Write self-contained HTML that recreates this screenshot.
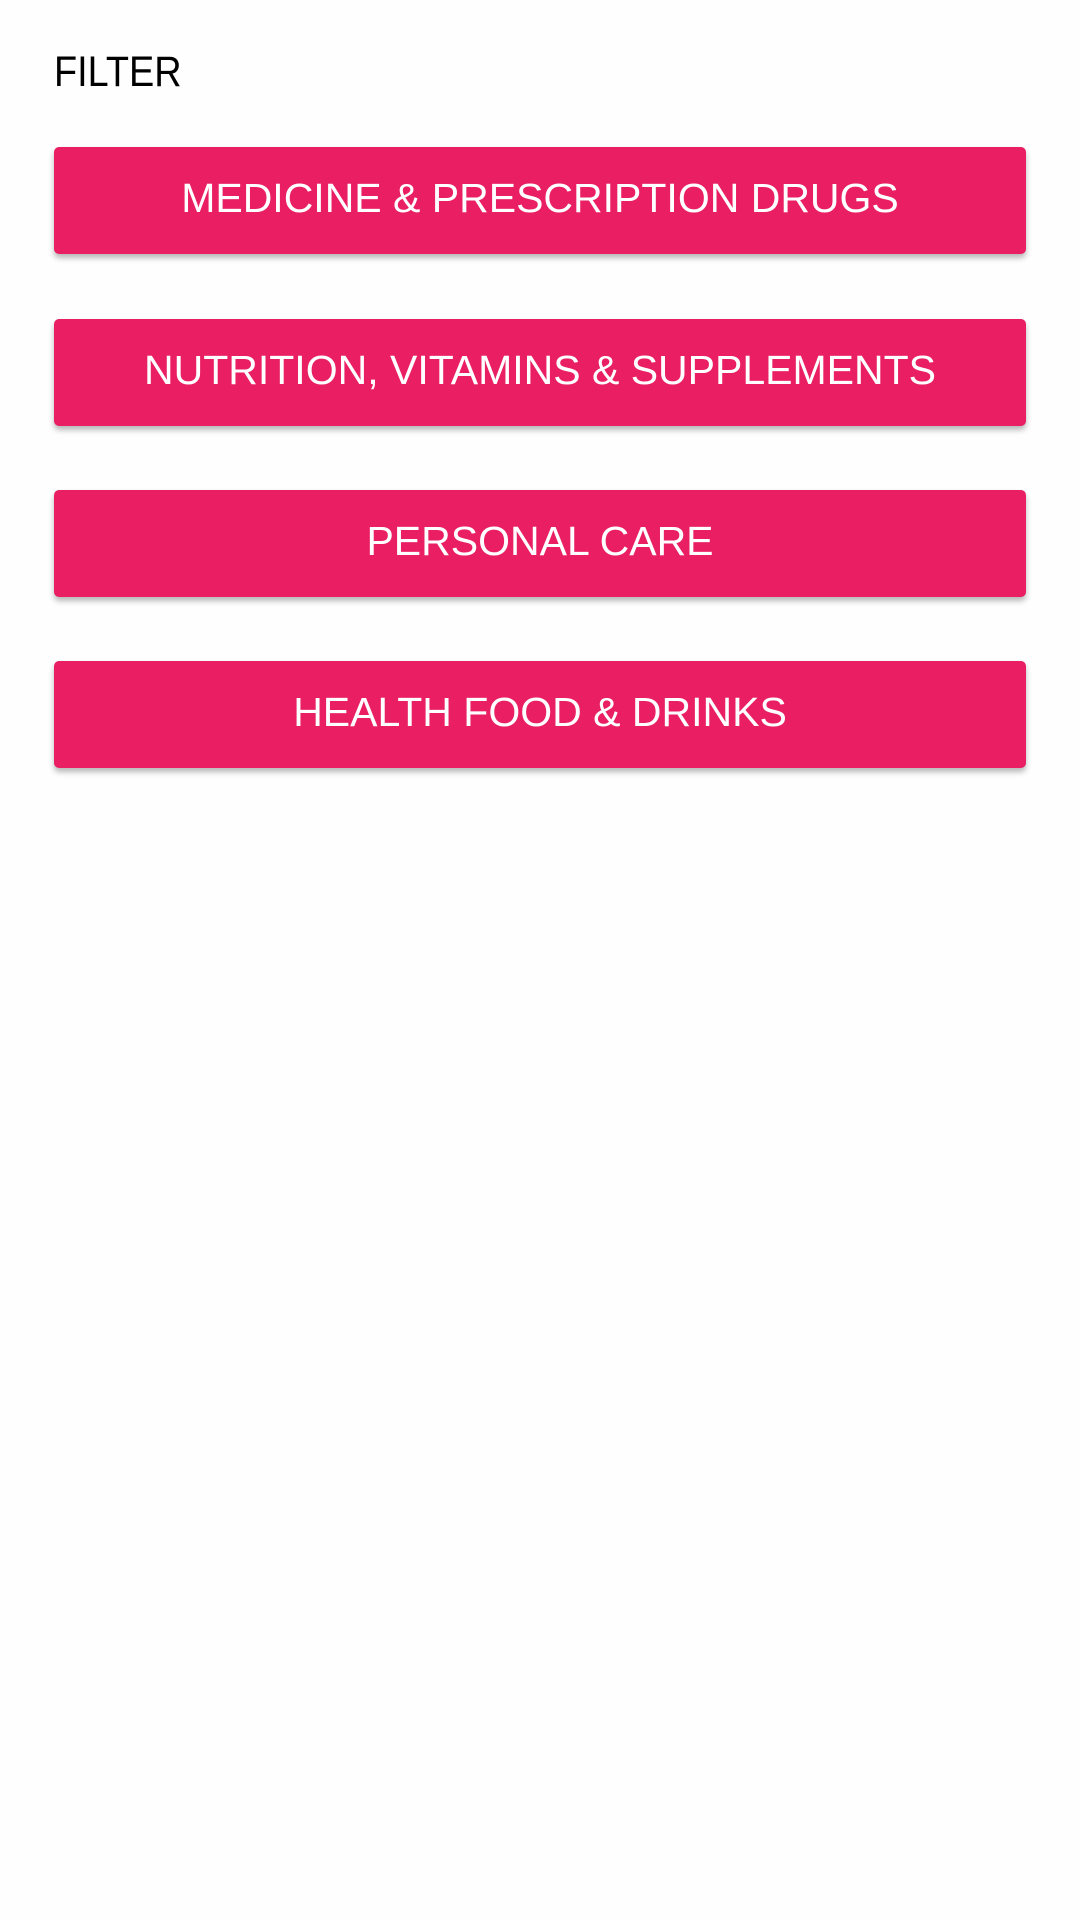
<!DOCTYPE html>
<html><head><meta charset="utf-8"><style>
html,body{margin:0;padding:0;}
body{width:1080px;height:1920px;background:#fefefe;font-family:"Liberation Sans",sans-serif;position:relative;overflow:hidden;}
.t{position:absolute;left:54px;top:46px;font-size:43px;color:#000;line-height:52px;transform:scaleX(0.88);transform-origin:0 0;}
.b{position:absolute;left:54px;width:972px;height:107px;background:#e91e63;border-radius:5px;box-shadow:0 4px 6px rgba(0,0,0,0.28);color:#fff;font-size:41px;letter-spacing:0px;text-align:center;line-height:103px;}
</style></head><body>
<div class="t">FILTER</div>
<div class="b" style="top:147px">MEDICINE &amp; PRESCRIPTION DRUGS</div>
<div class="b" style="top:319px">NUTRITION, VITAMINS &amp; SUPPLEMENTS</div>
<div class="b" style="top:490px">PERSONAL CARE</div>
<div class="b" style="top:661px">HEALTH FOOD &amp; DRINKS</div>
</body></html>
